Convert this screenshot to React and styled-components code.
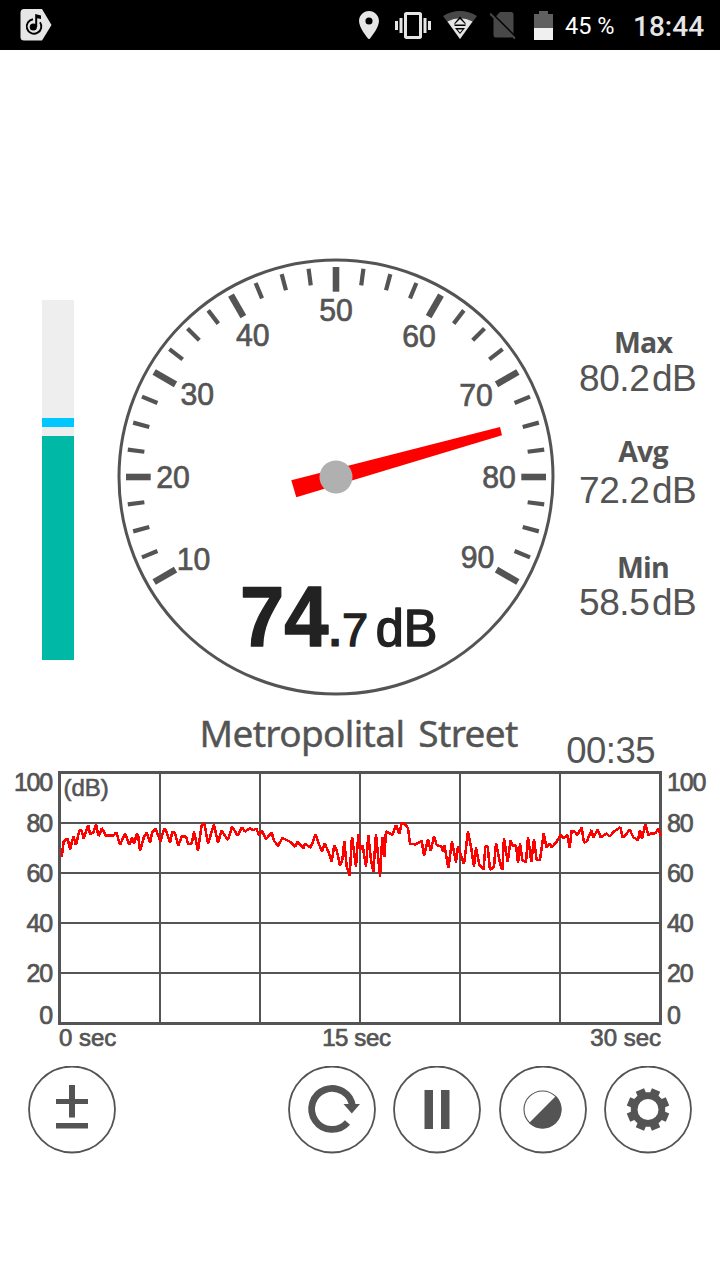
import React from "react";
import styled, { createGlobalStyle } from "styled-components";

const INK = "#545454";
const SANS = '"Liberation Sans", Arial, sans-serif';

const GlobalStyle = createGlobalStyle`
  * { box-sizing: border-box; }
  body { margin: 0; background: #fff; }
`;

const Screen = styled.div`
  width: 720px;
  height: 1280px;
  overflow: hidden;
  display: flex;
  flex-direction: column;
  background: #fff;
  color: ${INK};
  font-family: ${SANS};
`;

const StatusBar = styled.header`
  height: 50px;
  flex: none;
  display: flex;
  align-items: center;
  padding: 0 16px 0 20px;
  background: #000;
  color: #fff;
  font-family: Roboto, sans-serif;
`;

const StatusIcon = styled.svg`
  display: block;
  flex: none;
  margin-left: ${(p) => p.$gap || 0}px;
`;

const Spacer = styled.div`
  flex: 1;
`;

const BatteryText = styled.span`
  width: 80px;
  padding-left: 12px;
  font-size: 23.5px;
  line-height: 50px;
  padding-top: 2px;
  white-space: nowrap;
`;

const Clock = styled.span`
  width: 71px;
  font-size: 28px;
  font-weight: 500;
  line-height: 50px;
  padding-top: 3px;
  color: #e6e6e6;
`;

const Meter = styled.section`
  display: flex;
  height: 438px;
  margin-top: 208px;
  flex: none;
`;

const LevelTrack = styled.div`
  width: 32px;
  height: 360px;
  margin: 42px 43px 0 42px;
  display: flex;
  flex-direction: column;
  justify-content: flex-end;
  background: #eee;
`;

const LevelPeak = styled.div`
  height: 9px;
  margin-bottom: 9px;
  background: #00c8ff;
`;

const LevelFill = styled.div`
  height: 224px;
  background: #00b8a6;
`;

const Dial = styled.svg`
  display: block;
  flex: none;
  width: 438px;
  height: 438px;
  font-family: ${SANS};
`;

const Stats = styled.div`
  display: flex;
  flex-direction: column;
  padding: 66px 0 0 24px;
`;

const Stat = styled.div`
  height: ${(p) => p.$h}px;
  width: 128px;
`;

const StatName = styled.div`
  height: ${(p) => p.$h}px;
  text-align: center;
  font: 700 28.5px/36px "Open Sans", sans-serif;
  letter-spacing: -0.8px;
`;

const StatValue = styled.div`
  display: flex;
  gap: 2.5px;
  height: 37px;
  font-size: 37px;
  line-height: 37px;
  letter-spacing: -0.4px;
`;

const TitleRow = styled.div`
  height: 75px;
  flex: none;
  display: flex;
  justify-content: space-between;
  padding: 0 65px 0 199.5px;
`;

const Title = styled.h1`
  margin: 0;
  font: 400 37px/73px "Noto Sans", sans-serif;
  letter-spacing: -0.65px;
  word-spacing: 5px;
  -webkit-text-stroke: 0.4px ${INK};
  white-space: nowrap;
`;

const Timer = styled.div`
  font-size: 36.5px;
  line-height: 37px;
  padding-top: 36px;
  letter-spacing: -0.5px;
`;

const ChartArea = styled.section`
  display: grid;
  grid-template-columns: 58px 604px 58px;
  height: 254px;
  flex: none;
`;

const Axis = styled.div`
  display: flex;
  flex-direction: column;
  align-items: ${(p) => (p.$side === "left" ? "flex-end" : "flex-start")};
  padding: ${(p) => (p.$side === "left" ? "0 6px 0 0" : "0 0 0 5px")};
`;

const AxisLabel = styled.div`
  height: ${(p) => p.$h}px;
  display: flex;
  align-items: flex-end;
  font-size: 25px;
  line-height: 25px;
  letter-spacing: -1.2px;
  -webkit-text-stroke: 0.7px ${INK};
`;

const Plot = styled.svg`
  display: block;
  width: 604px;
  height: 254px;
  font-family: ${SANS};
`;

const TimeAxis = styled.div`
  display: flex;
  justify-content: space-between;
  height: 41px;
  flex: none;
  padding: 0 59px 0 59px;
  font-size: 24px;
  line-height: 26px;
  -webkit-text-stroke: 0.7px ${INK};
`;

const TimeLabel = styled.span`
  letter-spacing: ${(p) => p.$tracking || 0}px;
  padding-left: ${(p) => p.$indent || 0}px;
`;

const Toolbar = styled.nav`
  display: flex;
  align-items: center;
  gap: 17.4px;
  padding: 0 28px;
`;

const RoundButton = styled.button`
  width: 88px;
  height: 88px;
  padding: 0;
  display: block;
  background: none;
  border: 0;
  svg { display: block; }
`;

const LABELS = [
  ["10", 193.5, 570], ["20", 173, 488], ["30", 197.3, 405], ["40", 252.7, 345.5],
  ["50", 336, 321], ["60", 419, 347], ["70", 476, 406], ["80", 499, 488], ["90", 477.5, 568],
];

function Gauge() {
  const ticks = Array.from({ length: 33 }, (_, i) => ({ angle: -120 + i * 7.5, major: i % 4 === 0 }));
  return (
    <Dial viewBox="117 258 438 438">
      <circle cx="336" cy="477" r="217" fill="none" stroke={INK} strokeWidth="3" />
      {ticks.map((t) => (
        <line
          key={t.angle}
          x1="336" x2="336" y1="267" y2={t.major ? 291.7 : 283.7}
          stroke={INK}
          strokeWidth={t.major ? 6.6 : 4.2}
          transform={`rotate(${t.angle} 336 477)`}
        />
      ))}
      <g fill={INK} stroke={INK} strokeWidth="0.7" fontSize="31.5">
        {LABELS.map(([text, x, y]) => (
          <text key={text} x={x - 16.8} y={y} textLength="33.6" lengthAdjust="spacingAndGlyphs">{text}</text>
        ))}
      </g>
      <polygon points="500,427 502,435.3 296.3,497.3 291.3,480.3" fill="#f00" />
      <circle cx="336" cy="477" r="16.5" fill="#b0b0b0" />
      <g fill="#222" stroke="#222" strokeLinejoin="round">
        <text x="240" y="646" fontSize="86" fontWeight="700" textLength="88.5" lengthAdjust="spacingAndGlyphs" strokeWidth="1.4">74</text>
        <text x="328.700" y="646" fontSize="46" fontWeight="700" strokeWidth="0.8">.</text>
        <text x="342" y="645.5" fontSize="47" strokeWidth="1.4">7</text>
        <text x="375.8" y="645.5" fontSize="51.5" textLength="61.5" lengthAdjust="spacingAndGlyphs" strokeWidth="1.5">dB</text>
      </g>
    </Dial>
  );
}

const TRACE =
  "185,472 191,425 203,415 210,448 220,410 228,435 238,392 245,392 251,415 265,375 270,402 280,398 288,373 295,408 300,400 305,384 318,407 340,407 349,397 360,435 375,400 388,435 396,412 402,432 410,403 414,403 420,453 432,410 440,398 450,428 456,398 467,385 481,425 492,388 497,388 510,428 517,394 525,400 535,437 545,410 558,410 565,433 575,430 582,395 594,452 600,410 605,375 613,370 624,430 642,374 654,427 665,392 684,420 696,380 713,407 726,382 735,395 749,385 760,390 769,386 777,405 786,392 798,417 815,398 822,422 834,438 847,414 870,425 886,440 893,425 910,445 915,432 932,443 947,402 958,435 966,455 974,430 985,455 995,485 1003,435 1010,450 1020,497 1027,480 1033,423 1040,500 1049,528 1056,410 1068,500 1075,403 1080,450 1088,437 1098,500 1105,405 1113,480 1120,515 1128,402 1140,530 1147,410 1153,472 1158,394 1177,405 1188,375 1198,402 1205,368 1215,372 1224,385 1230,432 1248,433 1265,422 1272,467 1284,418 1292,453 1302,410 1310,435 1325,440 1329,455 1333,435 1345,504 1356,425 1368,487 1374,440 1392,492 1404,395 1413,440 1422,500 1428,443 1438,495 1451,508 1456,438 1463,440 1470,510 1482,500 1488,430 1500,490 1507,510 1512,415 1523,485 1532,420 1536,436 1548,436 1554,490 1560,430 1567,480 1578,487 1584,412 1594,485 1602,418 1610,480 1620,480 1631,400 1640,443 1650,430 1655,443 1670,425 1682,405 1690,414 1702,405 1709,443 1715,392 1725,395 1732,405 1745,382 1752,428 1760,425 1775,390 1780,414 1793,388 1802,412 1820,400 1828,410 1842,395 1861,382 1868,412 1875,408 1889,388 1900,412 1914,420 1920,390 1926,417 1936,372 1945,405 1955,400 1966,400 1975,385 1982,408";

function Chart() {
  return (
    <Plot viewBox="58 771 604 254">
      <g stroke={INK} strokeWidth="2">
        {[160, 260, 360, 460, 560].map((x) => <line key={x} x1={x} x2={x} y1="772" y2="1023" />)}
        {[823, 873, 923, 973].map((y) => <line key={y} x1="60" x2="661" y1={y} y2={y} />)}
      </g>
      <rect x="59.5" y="772.5" width="601" height="251" fill="none" stroke={INK} strokeWidth="3" />
      <text x="63.500" y="796" fontSize="24" fill={INK} stroke={INK} strokeWidth="0.6">(dB)</text>
      <g transform="translate(0 700) scale(0.33333)">
        <polyline points={TRACE} fill="none" stroke="#f00" strokeWidth="7.6" strokeLinejoin="bevel" shapeRendering="crispEdges" />
      </g>
    </Plot>
  );
}

const SCALE = [["100", 24], ["80", 40.5], ["60", 50], ["40", 50.5], ["20", 50], ["0", 41.5]];

function Scale({ side }) {
  return (
    <Axis $side={side}>
      {SCALE.map(([text, h]) => <AxisLabel key={text} $h={h}>{text}</AxisLabel>)}
    </Axis>
  );
}

function IconButton({ label, children }) {
  return (
    <RoundButton aria-label={label}>
      <svg width="88" height="88" viewBox="-44 -43.5 88 88" fill={INK}>
        <circle r="43" fill="none" stroke={INK} strokeWidth="1.8" />
        {children}
      </svg>
    </RoundButton>
  );
}

function gearPath() {
  const pts = [];
  const at = (r, deg) => {
    const a = (deg * Math.PI) / 180;
    pts.push(`${(r * Math.cos(a)).toFixed(2)},${(r * Math.sin(a)).toFixed(2)}`);
  };
  for (let i = 0; i < 8; i++) {
    const c = 22.5 + i * 45;
    at(17.3, c - 15);
    at(21.6, c - 12);
    at(21.6, c + 12);
    at(17.3, c + 15);
  }
  return `M${pts.join("L")}ZM10.5,0A10.5,10.5 0 1 0 -10.5,0A10.5,10.5 0 1 0 10.5,0Z`;
}

const STATS = [
  { name: "Max", value: "80.2", height: 109, nameHeight: 36 },
  { name: "Avg", value: "72.2", height: 115.5, nameHeight: 39 },
  { name: "Min", value: "58.5", height: 112.5, nameHeight: 35.5 },
];

export default function App() {
  return (
    <Screen>
      <GlobalStyle />
      <StatusBar>
        <StatusIcon width="32" height="32" viewBox="0 0 32 32">
          <path d="M4 0H22L31.5 16L22 31.5H4Q.5 31.5 .5 28V4Q.5 0 4 0Z" fill="#e6e6e6" />
          <path d="M13 10.200A7.300 7.300 0 1 0 20 13.200" fill="none" stroke="#000" strokeWidth="1.900" />
          <circle cx="13.3" cy="18" r="3.6" />
          <path d="M15.200 5L21 6.400V10L17.200 9.200V18H15.200Z" />
        </StatusIcon>
        <Spacer />
        <StatusIcon width="20" height="28.5" viewBox="5 2 14 20" fill="#e6e6e6">
          <path d="M12 2C8.13 2 5 5.13 5 9c0 5.25 7 13 7 13s7-7.75 7-13c0-3.87-3.13-7-7-7zm0 9.5a2.5 2.5 0 1 1 0-5 2.5 2.5 0 0 1 0 5z" />
        </StatusIcon>
        <StatusIcon $gap={16} width="36" height="27" viewBox="0 3 24 18" fill="#e6e6e6">
          <path d="M0 15h2V9H0v6zm3 2h2V7H3v10zm19-8v6h2V9h-2zm-3 8h2V7h-2v10zM16.500 3h-9C6.670 3 6 3.670 6 4.500v15c0 .83.67 1.500 1.500 1.500h9c.83 0 1.500-.67 1.500-1.500v-15c0-.83-.67-1.500-1.500-1.500zM16 19H8V5h8v14z" />
        </StatusIcon>
        <StatusIcon $gap={12} width="34" height="28" viewBox="0 0 34 28">
          <path d="M0 5Q17-5 34 5L17 28Z" fill="#484848" />
          <path d="M4.500 10.500Q17 4 29.500 10.500L17 28Z" fill="#e6e6e6" />
          <path d="M17 5.500L11.500 12V15H22.500V12Z" />
          <path d="M12 17H22L17 23Z" />
          <path d="M17 8L11.500 13.500H22.500Z" fill="#e6e6e6" />
          <path d="M14.500 18.500H19.500L17 21.500Z" fill="#e6e6e6" />
        </StatusIcon>
        <StatusIcon $gap={13} width="26" height="29" viewBox="0 0 26 29">
          <path d="M10 1H21Q23.500 1 23.500 3.500V24Q23.500 26.500 21 26.500H6Q3.500 26.500 3.500 24V8Z" fill="#484848" />
          <path d="M2 2.500L25.500 26" stroke="#000" strokeWidth="2" />
          <path d="M0 2.500L25 27.500" stroke="#484848" strokeWidth="2" />
        </StatusIcon>
        <StatusIcon $gap={18} width="19" height="29" viewBox="0 0 19 29">
          <path d="M0 3H5V0H14V3H19V17H0Z" fill="#606060" />
          <path d="M0 17H19V29H0Z" fill="#f0f0f0" />
        </StatusIcon>
        <BatteryText>45 %</BatteryText>
        <Clock>18:44</Clock>
      </StatusBar>

      <Meter>
        <LevelTrack>
          <LevelPeak />
          <LevelFill />
        </LevelTrack>
        <Gauge />
        <Stats>
          {STATS.map((s) => (
            <Stat key={s.name} $h={s.height}>
              <StatName $h={s.nameHeight}>{s.name}</StatName>
              <StatValue><span>{s.value}</span><span>dB</span></StatValue>
            </Stat>
          ))}
        </Stats>
      </Meter>

      <TitleRow>
        <Title>Metropolital Street</Title>
        <Timer>00:35</Timer>
      </TitleRow>

      <ChartArea>
        <Scale side="left" />
        <Chart />
        <Scale side="right" />
      </ChartArea>
      <TimeAxis>
        <TimeLabel>0 sec</TimeLabel>
        <TimeLabel $tracking={-0.4} $indent={6}>15 sec</TimeLabel>
        <TimeLabel>30 sec</TimeLabel>
      </TimeAxis>

      <Toolbar>
        <IconButton label="Calibrate">
          <path d="M-16-10.500H-3V-24.500H3V-10.500H16V-5.500H3V8H-3V-5.500H-16ZM-16 13.500H16V19H-16Z" />
        </IconButton>
        <Spacer />
        <IconButton label="Restart">
          <path d="M20.500-3A20.500 20.500 0 1 0 15.500 13" fill="none" stroke={INK} strokeWidth="6.800" />
          <path d="M11.500-5.500H28L19.800 4Z" />
        </IconButton>
        <IconButton label="Pause">
          <path d="M-12.500-19.500H-4V19.500H-12.500ZM4-19.500H12.500V19.500H4Z" />
        </IconButton>
        <IconButton label="Theme">
          <g transform="translate(-0.5 0)">
            <circle r="18.500" fill="none" stroke={INK} strokeWidth="1.100" />
            <path d="M13.435-13.435A19 19 0 0 1 -13.435 13.435Z" />
          </g>
        </IconButton>
        <IconButton label="Settings">
          <path d={gearPath()} fillRule="evenodd" />
        </IconButton>
      </Toolbar>
    </Screen>
  );
}
